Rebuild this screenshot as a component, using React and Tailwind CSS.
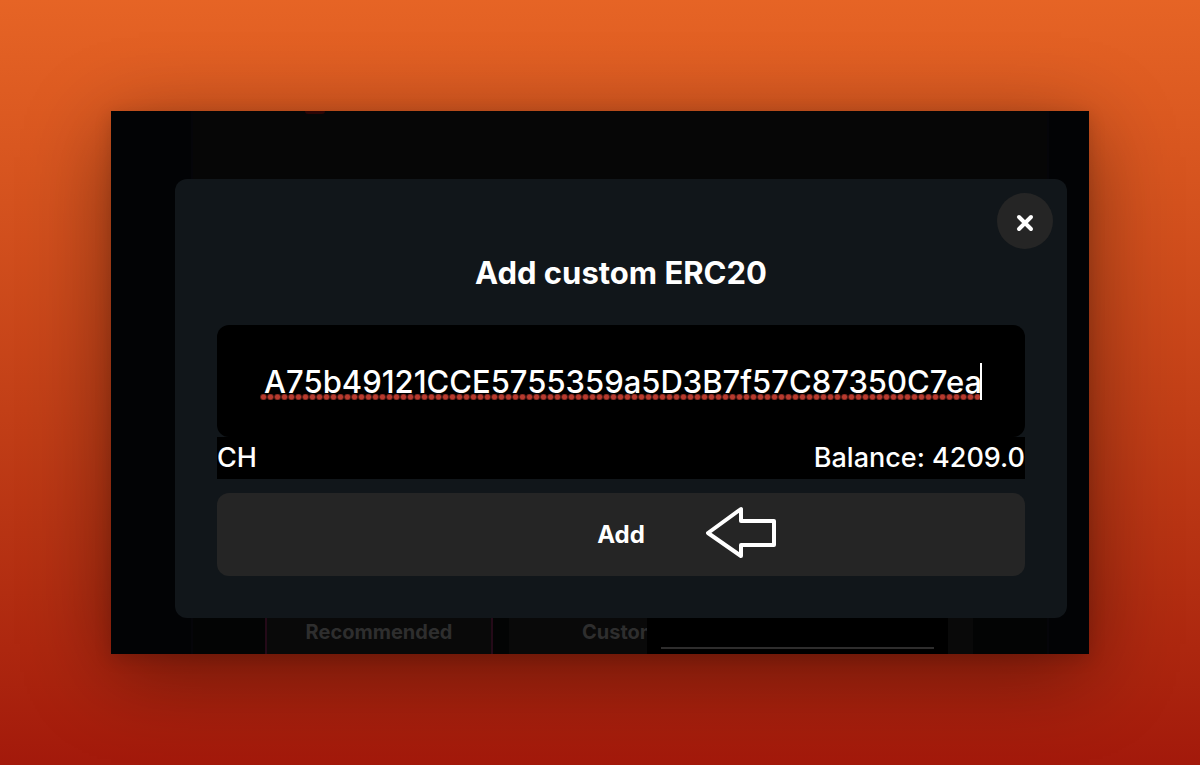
function Backdrop() {
  return (
    <div aria-hidden="true" className="absolute inset-0 flex justify-center overflow-hidden bg-[#020305]">
      <div className="ml-20 mr-10 flex flex-1 flex-col justify-between border-x-2 border-[#050509] bg-[#060606]">
        <div className="ml-28 h-[3px] w-5 rounded-b-full bg-[#2c0505]" />
        <div className="flex h-10 justify-between bg-[#030404] pl-[72px] pr-[74px] text-xl font-bold text-[#2e2e2e]">
          <div className="flex w-[228px] items-center justify-center border-x-2 border-[#240a18] bg-[#090909] pb-1">
            Recommended
          </div>
          <div className="ml-4 flex flex-1 bg-[#090909]">
            <div className="flex w-[138px] items-center overflow-hidden pb-1 pl-[73px]">Custom</div>
            <div className="flex flex-1 items-end bg-black px-[14px] pb-[5px]">
              <div className="h-[2px] flex-1 bg-[#2e2d2d]" />
            </div>
            <div className="w-[25px]" />
          </div>
        </div>
      </div>
    </div>
  );
}

function scrollToEnd(input) {
  if (input) input.scrollLeft = input.scrollWidth;
}

function AddTokenDialog() {
  return (
    <form
      role="dialog"
      aria-labelledby="dialog-title"
      onSubmit={(e) => e.preventDefault()}
      className="relative flex flex-col rounded-xl bg-[#11161a] px-[42px] pb-[42px] pt-[74px]"
    >
      <button
        type="button"
        aria-label="Close"
        className="absolute right-[14px] top-[14px] flex size-14 items-center justify-center rounded-full bg-[#252525]"
      >
        <svg viewBox="0 0 18 18" className="mt-1 size-[18px]" fill="none" stroke="white" strokeWidth="4" strokeLinecap="round">
          <path d="M3 3L15 15M15 3L3 15" />
        </svg>
      </button>

      <h1 id="dialog-title" className="text-center text-[31px] font-bold leading-10">
        Add custom ERC20
      </h1>

      <div className="relative mt-8 h-28 overflow-hidden rounded-xl bg-black px-[43px]">
        <input
          ref={scrollToEnd}
          type="text"
          aria-label="Token address"
          spellCheck="false"
          defaultValue="A75b49121CCE5755359a5D3B7f57C87350C7ea"
          className="h-full w-full bg-transparent text-right text-[31px] font-medium outline-none"
        />
        <div className="absolute inset-x-[43px] top-[69px] h-[6px] bg-[radial-gradient(circle_at_center,#b83a2e_2px,transparent_4px)] bg-[length:7px_6px] bg-repeat-x" />
        <div className="absolute right-[43px] top-[38px] h-[37px] w-[2px] bg-white" />
      </div>

      <div className="flex h-[42px] items-center justify-between bg-black text-[27px] font-medium">
        <span>CH</span>
        <span>Balance: 4209.0</span>
      </div>

      <button
        type="submit"
        className="relative mt-[14px] h-[83px] rounded-xl bg-[#252525] text-2xl font-bold"
      >
        Add
        <svg
          viewBox="0 0 72 54"
          className="absolute left-1/2 top-[13px] ml-[84px] h-[54px] w-[72px]"
          fill="none"
          stroke="white"
          strokeWidth="4"
        >
          <path d="M3 27L36 3V15H69V39H36V50Z" strokeLinejoin="round" />
        </svg>
      </button>
    </form>
  );
}

export default function App() {
  return (
    <main className="min-h-screen bg-linear-to-b from-[#e66425] to-[#a3190b] p-[111px] font-['Inter',sans-serif] text-white">
      <div className="relative pb-9 pl-16 pr-[22px] pt-[68px] shadow-[0_18px_80px_rgba(0,0,0,0.4),0_4px_16px_rgba(0,0,0,0.15)]">
        <Backdrop />
        <AddTokenDialog />
      </div>
    </main>
  );
}
